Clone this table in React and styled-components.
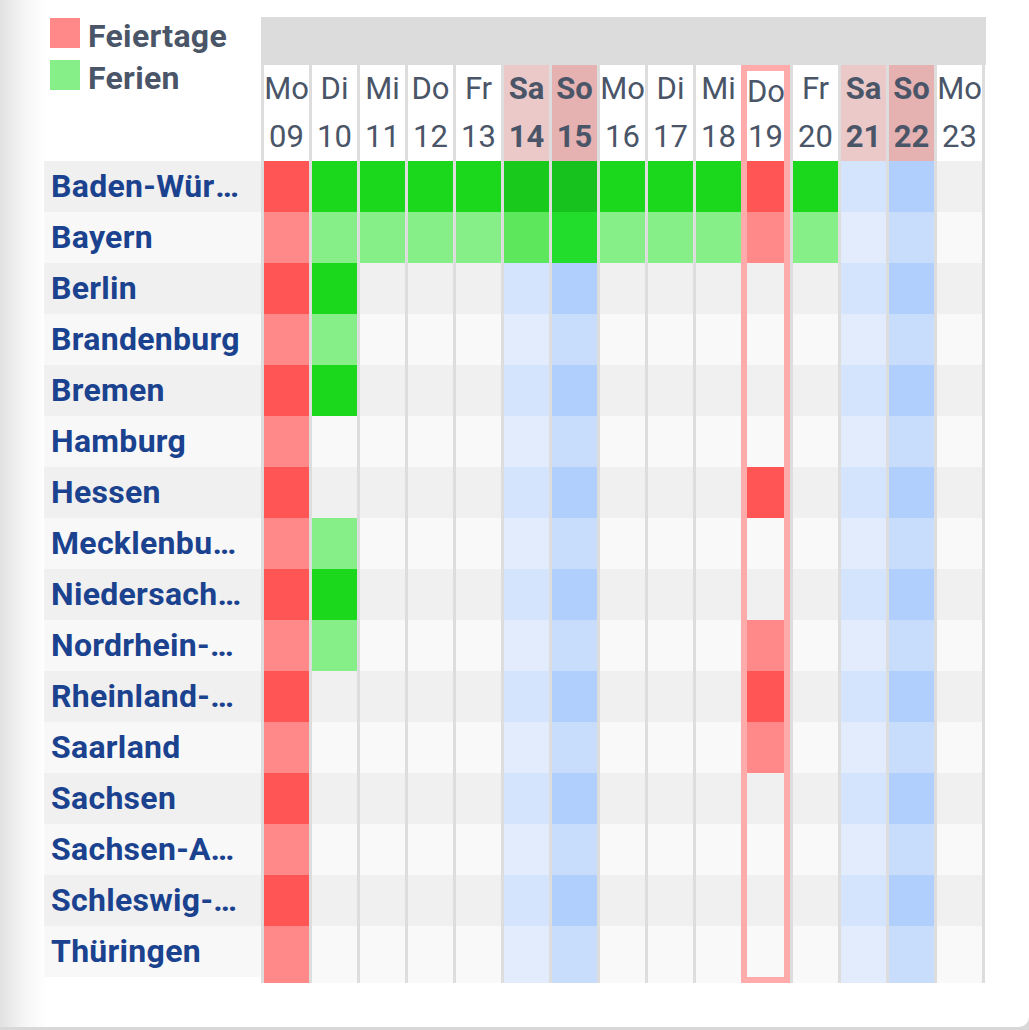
import React from 'react'
import styled, { createGlobalStyle } from 'styled-components'

const GlobalStyle = createGlobalStyle`
  html, body {
    margin: 0;
    padding: 0;
    background: #d8d8d8;
  }
  body {
    font-family: Roboto, 'Noto Sans', 'Liberation Sans', sans-serif;
  }
`

const days = [
  { wd: 'Mo', d: '09' },
  { wd: 'Di', d: '10' },
  { wd: 'Mi', d: '11' },
  { wd: 'Do', d: '12' },
  { wd: 'Fr', d: '13' },
  { wd: 'Sa', d: '14', weekend: 'sa' },
  { wd: 'So', d: '15', weekend: 'so' },
  { wd: 'Mo', d: '16' },
  { wd: 'Di', d: '17' },
  { wd: 'Mi', d: '18' },
  { wd: 'Do', d: '19', today: true },
  { wd: 'Fr', d: '20' },
  { wd: 'Sa', d: '21', weekend: 'sa' },
  { wd: 'So', d: '22', weekend: 'so' },
  { wd: 'Mo', d: '23' },
]

// H = Feiertag, F = Ferien, per day index
const states = [
  { name: 'Baden-Württemberg', marks: { 0: 'H', 1: 'F', 2: 'F', 3: 'F', 4: 'F', 5: 'F', 6: 'F', 7: 'F', 8: 'F', 9: 'F', 10: 'H', 11: 'F' } },
  { name: 'Bayern', marks: { 0: 'H', 1: 'F', 2: 'F', 3: 'F', 4: 'F', 5: 'F', 6: 'F', 7: 'F', 8: 'F', 9: 'F', 10: 'H', 11: 'F' } },
  { name: 'Berlin', marks: { 0: 'H', 1: 'F' } },
  { name: 'Brandenburg', marks: { 0: 'H', 1: 'F' } },
  { name: 'Bremen', marks: { 0: 'H', 1: 'F' } },
  { name: 'Hamburg', marks: { 0: 'H' } },
  { name: 'Hessen', marks: { 0: 'H', 10: 'H' } },
  { name: 'Mecklenburg-Vorpommern', marks: { 0: 'H', 1: 'F' } },
  { name: 'Niedersachsen', marks: { 0: 'H', 1: 'F' } },
  { name: 'Nordrhein-Westfalen', marks: { 0: 'H', 1: 'F', 10: 'H' } },
  { name: 'Rheinland-Pfalz', marks: { 0: 'H', 10: 'H' } },
  { name: 'Saarland', marks: { 0: 'H', 10: 'H' } },
  { name: 'Sachsen', marks: { 0: 'H' } },
  { name: 'Sachsen-Anhalt', marks: { 0: 'H' } },
  { name: 'Schleswig-Holstein', marks: { 0: 'H' } },
  { name: 'Thüringen', marks: { 0: 'H' } },
]

const palette = {
  H: { none: ['#ff5555', '#ff8888'], sa: ['#ff5555', '#ff8888'], so: ['#ff5555', '#ff8888'] },
  F: { none: ['#1bd81d', '#87ef87'], sa: ['#19ca1c', '#5de75d'], so: ['#17c21f', '#22dd2c'] },
  base: { none: ['#f0f0f0', '#f9f9f9'], sa: ['#d4e4fc', '#e2ecfd'], so: ['#b1cffc', '#c8dcfc'] },
}

const cellColor = (mark, weekend, index) => {
  const set = palette[mark || 'base'][weekend || 'none']
  return set[index % 2]
}

const headColor = { sa: '#ebc9c9', so: '#e6b1b1' }

const Page = styled.div`
  box-sizing: border-box;
  min-height: 1027px;
  padding: 17px 0 0 44px;
  background: linear-gradient(to right, #e1e1e1 0px, #f4f4f4 22px, #ffffff 46px);
  border-bottom-right-radius: 10px;
`

const Table = styled.div`
  display: flex;
  align-items: flex-start;
`

const LabelColumn = styled.div`
  width: 217px;
  display: flex;
  flex-direction: column;
`

const Legend = styled.div`
  height: 144px;
  padding: 1px 0 0 6px;
  box-sizing: border-box;
  display: flex;
  flex-direction: column;
  gap: 12px;
`

const LegendItem = styled.div`
  display: flex;
  align-items: center;
  gap: 8px;
  height: 30px;
  font-size: 32px;
  font-weight: 700;
  letter-spacing: 0.3px;
  color: #4a5568;
`

const LegendText = styled.span`
  padding-top: 6px;
`

const Swatch = styled.span`
  width: 30px;
  height: 30px;
  flex: none;
  background: ${(p) => p.$color};
`

const Label = styled.div`
  height: 51px;
  line-height: 51px;
  padding: 0 18px 0 7px;
  background: ${(p) => (p.$index % 2 ? '#f8f8f8' : '#f0f0f0')};
  color: #1a428e;
  font-size: 32px;
  font-weight: 700;
  letter-spacing: 0.3px;
  white-space: nowrap;
  overflow: hidden;
  text-overflow: ellipsis;
`

const DayArea = styled.div`
  display: flex;
  flex-direction: column;
`

const Band = styled.div`
  height: 48px;
  width: 725px;
  background: #dcdcdc;
`

const Columns = styled.div`
  display: flex;
`

const DayColumn = styled.div`
  display: flex;
  flex-direction: column;
  width: ${(p) => (p.$today ? '37px' : '45px')};
  border-left: 3px solid #dddddd;
  ${(p) => p.$last && 'border-right: 3px solid #dddddd;'}
  ${(p) => p.$today && 'border: 6px solid #ffabab;'}
`

const HeadCell = styled.div`
  height: ${(p) => p.$h}px;
  line-height: ${(p) => p.$h}px;
  background: ${(p) => headColor[p.$weekend] || '#ffffff'};
  color: #4a5568;
  font-size: 31px;
  font-weight: ${(p) => (p.$weekend ? 700 : 400)};
  text-align: center;
  overflow: hidden;
  white-space: nowrap;
`

const Cell = styled.div`
  height: ${(p) => (p.$tall ? 57 : 51)}px;
  background: ${(p) => p.$color};
`

const App = () => {
  return (
    <>
      <GlobalStyle />
      <Page>
        <Table>
          <LabelColumn>
            <Legend>
              <LegendItem>
                <Swatch $color='#ff8888' />
                <LegendText>Feiertage</LegendText>
              </LegendItem>
              <LegendItem>
                <Swatch $color='#87ef87' />
                <LegendText>Ferien</LegendText>
              </LegendItem>
            </Legend>
            {states.map((s, i) => (
              <Label key={s.name} $index={i}>
                {s.name}
              </Label>
            ))}
          </LabelColumn>
          <DayArea>
            <Band />
            <Columns>
              {days.map((day, di) => (
                <DayColumn
                  key={day.d}
                  $today={day.today}
                  $last={di === days.length - 1}
                >
                  <HeadCell $h={day.today ? 42 : 48} $weekend={day.weekend}>
                    {day.wd}
                  </HeadCell>
                  <HeadCell $h={48} $weekend={day.weekend}>
                    {day.d}
                  </HeadCell>
                  {states.map((s, i) => (
                    <Cell
                      key={s.name}
                      $tall={!day.today && i === states.length - 1}
                      $color={cellColor(s.marks[di], day.weekend, i)}
                    />
                  ))}
                </DayColumn>
              ))}
            </Columns>
          </DayArea>
        </Table>
      </Page>
    </>
  )
}

export default App
